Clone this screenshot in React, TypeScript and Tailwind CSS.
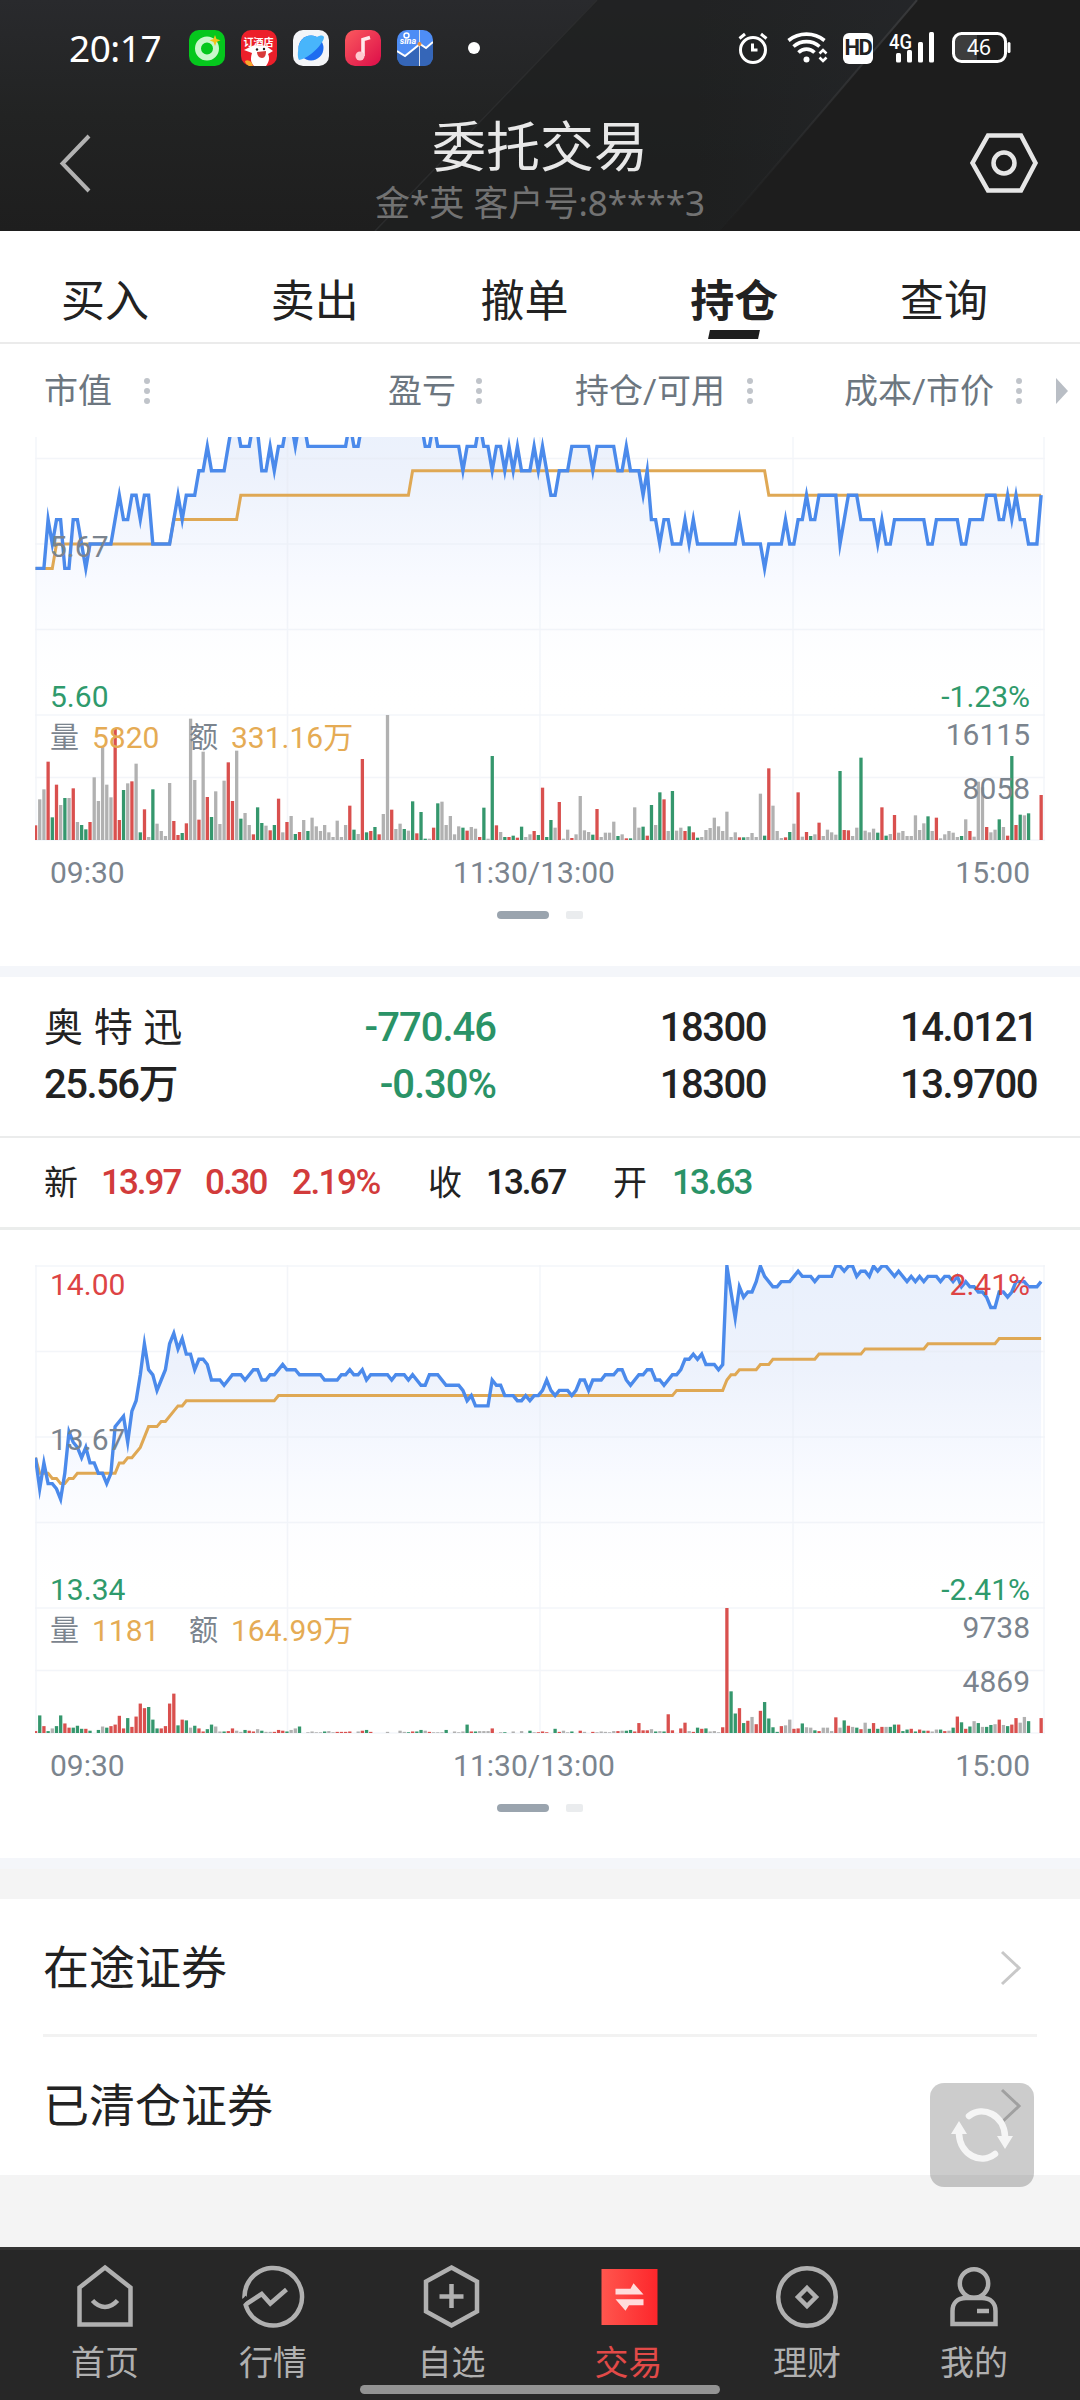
import type { ReactNode } from "react";

type Point = [number, number];

interface ChartProps {
  id: string;
  line: Point[];
  average: Point[];
  // one step of the price scale, in pixels
  step: number;
  bars: string;
  barMax: number;
  high?: string;
  highPct?: string;
  mid: string;
  low: string;
  lowPct: string;
  volume: string;
  amount: string;
  volMax: string;
  volHalf: string;
}

const TABS = ["买入", "卖出", "撤单", "持仓", "查询"];
const SLOT = 4.19;
const MID_Y = 172;
const BASE_Y = 468;

// "index:level" pairs, minute of the session and ticks from yesterday's close
const parse = (s: string): Point[] =>
  s.split(" ").map((p) => p.split(":").map(Number) as Point);

const LINE_A = parse(
  "0:-1 2:-1 3:1 4:0 5:1 6:1 7:-1 8:-1 9:1 10:1 11:0 12:-1 13:0 18:0 19:1 20:2 21:1 22:1 23:2 24:2 25:1 26:2 27:2 28:0 32:0 33:1 34:2 35:1 36:2 38:2 39:3 40:3 41:4 42:3 45:3 46:4 47:5 48:5 49:4 51:4 52:5 53:4.6 54:3 55:3 56:4 57:3 58:4 59:4 60:5 61:5 62:4 63:5 64:5 65:4 74:4 75:5 76:4 77:4 78:5 92:5 93:4 94:4 95:5 96:4 101:4 102:3 103:4 105:4 106:5 107:4 108:4 109:3 110:4 111:4 112:3 113:4 114:3 115:4 116:3 118:3 119:4 120:3 121:4 122:3 123:2 124:2 125:3 127:3 128:4 132:4 133:3 134:4 138:4 139:3 140:3 141:4 142:3 144:3 145:2 146:3 147:1 148:1 149:0 150:1 151:1 152:0 154:0 155:1 156:0 157:1 158:0 167:0 168:1 169:0 173:0 174:-1 175:0 178:0 179:1 180:0 181:0 182:1 183:1 184:2 185:1 186:1 187:2 191:2 192:0 193:1 194:2 196:2 197:1 200:1 201:0 202:1 203:0 204:0 205:1 212:1 213:0 214:0 215:1 220:1 221:0 222:0 223:1 226:1 227:2 229:2 230:1 231:1 232:2 233:1 234:2 235:1 236:1 237:0 239:0 240:2"
);
const AVG_A = parse("0:-1 4:-1 5:0 32:0 33:1 48:1 49:2 89:2 90:3 174:3 175:2 240:2");

const LINE_B = parse(
  "0:-4 1:-10 2:-5 3:-9 4:-9 5:-10 6:-12 7:-7 8:1 9:-1 10:-2 11:-4 12:-2 13:-5 14:-5 15:-7 16:-7 17:-9 18:-7 19:2 20:3 21:4 22:-1 23:5 24:7 25:12 26:18 27:13 28:12 29:9 30:11 31:13 32:18 33:20 34:17 35:19 36:16 37:16 38:13 39:15 40:15 41:14 42:11 44:11 45:10 47:12 49:12 50:11 52:13 53:13 54:11 55:11 56:12 57:12 59:14 60:13 62:13 63:12 68:12 69:11 72:11 73:12 74:12 75:13 76:12 77:12 78:13 79:11 80:12 84:12 85:11 86:12 88:12 89:11 90:12 92:10 93:10 94:12 96:12 98:10 101:10 102:9 103:7 104:8 105:6 108:6 109:11 110:10 111:10 112:8 114:8 115:7 116:7 117:8 118:7 119:8 120:8 121:9 122:11 123:9 124:8 125:9 127:9 128:8 129:9 130:11 131:11 132:9 133:11 135:11 136:12 138:12 139:13 140:13 141:11 142:10 144:12 145:12 146:13 147:13 148:11 149:11 150:10 152:12 153:12 154:13 155:15 156:15 157:16 158:15 159:16 160:14 162:14 163:13 164:14 165:33 166:28 167:23 168:29 169:27 170:28 171:28 172:30 173:33 174:31 175:30 176:29 177:29 178:30 180:30 182:32 183:31 185:31 186:30 187:31 190:31 191:33 192:33 193:32 194:33 195:33 196:31 197:32 198:32 199:31 200:33 201:32 202:33 203:33 205:31 206:32 208:30 209:31 210:30 211:31 212:30 213:31 215:31 216:30 217:31 218:31 219:30 220:31 221:29 222:30 223:29 224:29 225:28 226:28 227:27 228:25 229:25 230:28 231:28 232:27 233:28 234:30 236:30 237:29 239:29 240:30"
);
const AVG_B = parse(
  "0:-4 1:-7 3:-7 4:-8 5:-8 6:-9 7:-9 8:-8 9:-8 10:-7 19:-7 20:-5 21:-5 22:-4 23:-4 25:-2 27:2 29:2 30:3 31:3 34:6 35:6 36:7 57:7 58:8 152:8 153:9 164:9 165:11 166:12 167:12 168:13 172:13 173:14 175:14 176:15 186:15 187:16 197:16 198:17 212:17 213:18 229:18 230:19 240:19"
);

// r = up, g = down, x = flat
const BARS_A =
  "r44 x122 x152 r235 g68 r166 x105 g126 x126 r155 x54 g45 g32 r54 x188 x117 x280 x166 x128 r335 r60 g150 x170 r176 x229 g23 r92 x9 g152 x49 x27 x12 x171 r57 r15 g21 r50 x364 x180 r61 x265 r129 g69 x146 x48 x178 r233 r117 x268 g64 x81 x45 r17 g98 g51 x43 r29 g45 r124 x23 r54 x72 g18 r24 x60 g27 x67 x41 x27 x45 x23 x9 x58 x9 x45 r103 g31 x18 r243 g23 r27 g39 r17 x78 x375 r91 x33 x49 g33 x28 g116 r20 g84 g4 x4 r37 g110 x115 x45 x72 x17 x41 g37 r28 x39 x34 r9 g97 x4 g252 r44 x24 g9 r9 g13 r7 g40 x9 x17 r27 g15 r157 g9 g60 x37 r114 x4 x31 r6 x17 x132 x29 x24 g16 r93 x9 x22 x22 x55 g12 x17 r5 g5 x98 x37 g40 r13 g105 x45 g143 r122 x27 g147 x28 x37 r27 g41 r23 g7 x9 x30 x36 x67 x41 x27 x85 x9 x23 r8 g8 x9 x21 x9 x139 g13 r215 x103 x27 x6 r8 g24 x49 r143 x10 r24 g12 x17 r52 x12 x31 x23 x16 g207 r30 r29 x12 x37 g247 x28 x23 x34 g22 r98 g13 x18 r75 x22 x27 x12 x12 x74 x30 x50 g71 x27 r67 x5 x17 x27 x22 x9 g12 x62 r27 x10 x175 x158 r39 x23 x31 g62 x39 r13 g252 r45 g76 x74 g80 x0 x0 r135";
const BARS_B =
  "r5 g46 r18 g5 x12 g18 g46 r25 r14 g14 g19 g11 r11 g6 x0 g8 x17 g14 r18 r22 r45 r12 g39 r16 r43 r77 r65 g68 g35 g12 r12 r18 r77 r103 g20 r35 g33 x14 g19 r12 r4 g10 g22 x17 x4 g4 r5 r12 x6 x3 g8 r6 r4 x10 g6 x3 x3 r3 r8 r6 g4 x8 x12 g17 x0 x2 x4 x2 x2 g4 x5 x2 r3 r3 r3 r4 x0 x4 r6 g8 r3 x0 x0 x0 x3 x0 x0 x6 x3 g2 r4 g4 g8 x6 r3 x2 x2 x2 g8 x0 x4 x2 x4 g22 r4 g4 x5 x5 x5 r12 x0 x2 g2 x0 x4 x0 x5 x0 g6 x2 r2 r4 r2 x0 g11 r3 x6 x2 g4 x0 r6 x3 x0 r3 x2 x4 x3 x2 x5 r5 x6 g6 g8 r4 r26 r7 r7 x10 g4 x5 g4 r49 r7 x0 r12 r27 x5 r3 g14 r11 g12 x4 x5 x2 r15 r327 g109 g51 r65 g26 r32 x42 r23 r58 g81 g38 g15 g3 r18 x20 x35 r11 r12 g25 x15 x14 g7 r5 x14 x14 x5 r41 x14 g33 r19 x16 g14 r10 x27 g11 r26 g11 r16 x16 g16 g22 r22 g5 g9 r11 g4 r9 g6 r6 x4 x9 g9 r5 x6 g14 r43 g28 r11 g17 x31 g26 x16 g16 g21 x23 r35 x21 g18 r22 r39 x27 x42 g31 x0 x0 r39";

const BAR_COLORS: Record<string, string> = {
  r: "#d9504e",
  g: "#35976d",
  x: "#b1b1b1",
};

function toPath(points: Point[], step: number) {
  return points
    .map(([i, v], n) => `${n ? "L" : "M"}${(0.5 + i * SLOT).toFixed(1)} ${(MID_Y - v * step).toFixed(1)}`)
    .join("");
}

function TrendChart(props: ChartProps) {
  const { id, line, average, step, bars, barMax } = props;
  const path = toPath(line, step);

  return (
    <div className="h-[628px] shrink-0 pt-[35px]">
      <div className="relative mx-[35px]">
        <svg width="1010" height="470" viewBox="0 0 1010 470" fill="none">
          <defs>
            <linearGradient id={`fill-${id}`} x1="0" y1="0" x2="0" y2="343" gradientUnits="userSpaceOnUse">
              <stop offset="0" stopColor="#e9f0fc" />
              <stop offset="0.3" stopColor="#edf2fc" />
              <stop offset="0.6" stopColor="#f8faff" />
              <stop offset="1" stopColor="#ffffff" stopOpacity="0" />
            </linearGradient>
            <clipPath id={`clip-${id}`}>
              <rect x="0" y="0" width="1010" height="470" />
            </clipPath>
          </defs>
          <g clipPath={`url(#clip-${id})`}>
            <path d={`${path}V343H0.5Z`} fill={`url(#fill-${id})`} />
            <path
              d="M0 1H1010M0 86.5H1010M0 172H1010M0 257.5H1010M0 343H1010M0 405.5H1010M0 468H1010M1 0V468M252.5 0V468M505 0V468M758 0V468M1009 0V468"
              stroke="#e4e9f1"
              strokeOpacity="0.45"
              strokeWidth="1.5"
            />
            <path d={toPath(average, step)} stroke="#dfa854" strokeWidth="3" />
            <path d={path} stroke="#4b8aeb" strokeWidth="3.4" strokeMiterlimit="12" />
            {bars.split(" ").map((bar, i) => {
              const h = (Number(bar.slice(1)) / barMax) * 125;
              return (
                <rect
                  key={i}
                  x={i * SLOT - 1.1}
                  y={BASE_Y - h}
                  width="3.3"
                  height={h}
                  fill={BAR_COLORS[bar[0]]}
                />
              );
            })}
          </g>
        </svg>

        {props.high && (
          <div className="absolute inset-x-[15px] top-[1px] flex justify-between text-[#dd4444]">
            <span>{props.high}</span>
            <span>{props.highPct}</span>
          </div>
        )}
        <div className="absolute left-[15px] top-[156px] text-[#7b848e]">{props.mid}</div>
        <div className="absolute inset-x-[15px] top-[306px] flex justify-between text-[#2f9a6c]">
          <span>{props.low}</span>
          <span>{props.lowPct}</span>
        </div>
        <div className="absolute left-[15px] top-[347px] flex text-[#e5ab54]">
          <span className="w-[42px] text-[29px] text-[#7b848e]">量</span>
          <span className="w-[97px]">{props.volume}</span>
          <span className="w-[42px] text-[29px] text-[#7b848e]">额</span>
          <span>{props.amount}</span>
        </div>
        <div className="absolute right-[15px] top-[344px] text-[#7b848e]">{props.volMax}</div>
        <div className="absolute right-[15px] top-[398px] text-[#7b848e]">{props.volHalf}</div>
      </div>

      <div className="mx-[50px] mt-[12px] grid grid-cols-[1fr_auto_1fr] text-[#7b848e]">
        <span>09:30</span>
        <span className="-ml-[12px]">11:30/13:00</span>
        <span className="text-right">15:00</span>
      </div>
      <div className="ml-[497px] mt-[19px] flex gap-[17px]">
        <div className="h-2 w-[52px] rounded-full bg-[#9aa4ae]" />
        <div className="h-2 w-[17px] rounded-[2px] bg-[#eaecee]" />
      </div>
    </div>
  );
}

function SortDots() {
  return (
    <span className="flex flex-col gap-[4px]">
      <span className="size-[6px] rounded-full bg-[#c0c4ca]" />
      <span className="size-[6px] rounded-full bg-[#c0c4ca]" />
      <span className="size-[6px] rounded-full bg-[#c0c4ca]" />
    </span>
  );
}

function StatusBar() {
  return (
    <div className="flex h-[96px] items-center pl-[69px]">
      <span className="mb-[2px] w-[120px] font-['Noto_Sans'] text-[37px] leading-none tracking-[-0.5px] text-white">20:17</span>
      <div className="flex items-center gap-4">
        <svg width="36" height="36" viewBox="0 0 36 36">
          <rect width="36" height="36" rx="10" fill="#05c71d" />
          <circle cx="18" cy="18.5" r="9" fill="none" stroke="#c9f7cb" strokeWidth="6" />
          <path d="M26 5l1.5 4 4 1.2-4 1.8-1.5 4-1.5-4-4-1.8 4-1.2z" fill="#f5c518" />
        </svg>
        <svg width="36" height="36" viewBox="0 0 36 36">
          <rect width="36" height="36" rx="10" fill="#ec1f2a" />
          <text x="17.5" y="16" fontSize="10" fontWeight="700" fill="#fff" textAnchor="middle">订酒店</text>
          <path d="M3 20l8-4c4-1 10-1 14 0l7 5-5 3c2 4 1 8-2 12H13c-3-3-4-7-2-13z" fill="#fff" />
          <path d="M16 22l9-1c0 4-1 7-4 7s-5-3-5-6z" fill="#d83a3a" />
          <circle cx="16" cy="19.5" r="1.2" fill="#222" />
          <circle cx="23" cy="19" r="1.2" fill="#222" />
          <path d="M4 31c3-2 7 0 8 5H8c-2-1-4-3-4-5z" fill="#f5a92c" />
        </svg>
        <svg width="36" height="36" viewBox="0 0 36 36">
          <rect width="36" height="36" rx="10" fill="#f4f5f8" />
          <circle cx="18" cy="18" r="12.5" fill="#1e6cf0" />
          <path d="M6 30C4 26 5 21 6 15A12.5 12.5 0 0124 7c3-2 6-2 7 0 0 6-14 21-25 23z" fill="#48b5fb" />
        </svg>
        <svg width="36" height="36" viewBox="0 0 36 36">
          <defs>
            <linearGradient id="music" x1="0" y1="0" x2="1" y2="1">
              <stop offset="0" stopColor="#fb5a5e" />
              <stop offset="1" stopColor="#dc0d49" />
            </linearGradient>
          </defs>
          <rect width="36" height="36" rx="10" fill="url(#music)" />
          <path d="M18 26V9.500l7-2" fill="none" stroke="#ffe9ec" strokeWidth="3.600" />
          <circle cx="15" cy="26" r="4.500" fill="#ffc9d0" />
        </svg>
        <svg width="36" height="36" viewBox="0 0 36 36">
          <rect width="36" height="36" rx="10" fill="#4e8df5" />
          <path d="M0 21l8 5 15-12 6 4 7-6v14q0 10-10 10H10Q0 36 0 26z" fill="#3566b8" />
          <path d="M0 21l8 5 15-12 6 4 7-6" fill="none" stroke="#fff" strokeWidth="2" />
          <path d="M22.500 0V36" stroke="#d9dfea" />
          <circle cx="22.500" cy="14" r="2" fill="#f0913a" />
          <circle cx="9.500" cy="5.500" r="2.500" fill="none" stroke="#fff" strokeWidth="1.500" />
          <text x="11" y="14" fontSize="9" fontStyle="italic" fontWeight="700" fill="#fff" textAnchor="middle">sina</text>
        </svg>
      </div>
      <div className="ml-[35px] size-3 rounded-full bg-white" />

      <div className="ml-[257px] flex items-center">
        <svg width="32" height="34" viewBox="0 0 32 34" fill="none" stroke="#fff" strokeWidth="3">
          <circle cx="16" cy="19" r="12.500" />
          <path d="M15.500 12.500V19H20.500M2.500 7.500L8 3M24 3l5.500 4.500" />
        </svg>
        <svg className="ml-[18px]" width="42" height="34" viewBox="0 0 42 34" fill="none" stroke="#fff">
          <path d="M1.500 9.500C12 1 27 1 37.500 9.500M6.500 15.500C14 9 25 9 32.500 15.500M11.500 21.500C16 17 23 17 27.500 21.500" strokeWidth="3.600" />
          <circle cx="19.500" cy="28.500" r="3" fill="#fff" stroke="none" />
          <path d="M32.500 22.500l3.500-3.500 3.500 3.500M32.500 26.500l3.500 3.500 3.500-3.500" strokeWidth="2.600" />
        </svg>
        <div className="ml-[14px] flex h-[31px] w-[30px] items-center justify-center rounded-md bg-white">
          <span className="font-[Roboto] text-[22px] font-bold leading-none tracking-[-1.500px] text-[#222]">HD</span>
        </div>
        <svg className="ml-[15px]" width="48" height="34" viewBox="0 0 48 34" fill="#fff">
          <text x="1" y="17.500" fontFamily="Roboto" fontSize="21" fontWeight="500" textLength="23" lengthAdjust="spacingAndGlyphs">4G</text>
          <rect x="8" y="22" width="5" height="9.500" rx="1.500" />
          <rect x="19" y="19" width="5" height="12.500" rx="1.500" />
          <rect x="30" y="11" width="5" height="20.500" rx="1.500" />
          <rect x="41" y="1" width="5" height="30.500" rx="1.500" />
        </svg>
        <svg className="ml-[16px]" width="60" height="34" viewBox="0 0 60 34">
          <rect x="3" y="4" width="22" height="26" fill="#3d3d3d" />
          <rect x="1.500" y="2.500" width="52" height="28" rx="8" fill="none" stroke="#fff" strokeWidth="3" />
          <rect x="55.500" y="11" width="3" height="11" rx="1.500" fill="#fff" />
          <text x="27" y="24" fontFamily="Noto Sans" fontSize="21" fill="#fff" textAnchor="middle">46</text>
        </svg>
      </div>
    </div>
  );
}

function Header() {
  return (
    <header className="relative h-[231px] overflow-hidden bg-linear-to-b from-[#292a2d] via-[#222323] to-[#1e1e1e]">
      <svg className="absolute inset-0" width="1080" height="231" viewBox="0 0 1080 231">
        <defs>
          <linearGradient id="beam" x1="0" y1="0" x2="1" y2="0">
            <stop offset="0.3" stopColor="#282a2f" stopOpacity="0" />
            <stop offset="1" stopColor="#282a2f" stopOpacity="0.9" />
          </linearGradient>
          <linearGradient id="edge" x1="0" y1="0" x2="0" y2="1">
            <stop offset="0" stopColor="#38393b" />
            <stop offset="1" stopColor="#38393b" stopOpacity="0" />
          </linearGradient>
        </defs>
        <path d="M597 0H1080V231H375Z" fill="#1e1f1f" opacity="0.7" />
        <path d="M917 0H1080V231H720Z" fill="#1d1d1d" />
        <path d="M700 0H917L720 231H600Z" fill="url(#beam)" opacity="0.5" />
        <path d="M917 0L720 231" stroke="url(#edge)" strokeWidth="2" />
        <path d="M597 0L375 231" stroke="#2b2c2d" strokeWidth="1.500" />
      </svg>
      <div className="relative">
        <StatusBar />
        <div className="grid grid-cols-[1fr_auto_1fr] items-start pl-[58px] pr-[40px]">
          <svg className="mt-[37px]" width="36" height="60" viewBox="0 0 36 60" fill="none" stroke="#b2b2b2" strokeWidth="4">
            <path d="M31 3L4.500 30.500L31 58" />
          </svg>
          <div className="-ml-[18px] mt-[18px] flex flex-col items-center">
            <h1 className="text-[54px] leading-[70px] text-[#e8e8e8]">委托交易</h1>
            <p className="mt-[-3px] whitespace-pre font-['Noto_Sans','Noto_Sans_CJK_SC',sans-serif] text-[35px] leading-[44px] text-[#727272]">金*英 客户号:8****3</p>
          </div>
          <svg className="mt-[36px] justify-self-end" width="72" height="62" viewBox="0 0 72 62" fill="none" stroke="#e6e6e6" strokeWidth="4.500">
            <path d="M20 3.500H53L67.500 31L53 58.500H20L4.500 31Z" />
            <circle cx="36" cy="31" r="10.500" />
          </svg>
        </div>
      </div>
    </header>
  );
}

function Tabs() {
  return (
    <nav className="flex h-[113px] border-b-2 border-[#ebebeb] pr-[31px] text-[44px] text-[#222]">
      {TABS.map((tab) => (
        <div key={tab} className="flex flex-1 flex-col items-center pt-[43px]">
          <span className={tab === "持仓" ? "leading-[56px] font-bold" : "leading-[56px]"}>{tab}</span>
          {tab === "持仓" && <div className="h-[9px] w-[50px] -skew-x-12 bg-[#1e1e1e]" />}
        </div>
      ))}
    </nav>
  );
}

function ColumnHeader() {
  return (
    <div className="flex h-[93px] items-center pl-[44px] text-[34px] text-[#6c767f]">
      <span className="w-[100px]">市值</span>
      <SortDots />
      <span className="ml-[238px] w-[88px]">盈亏</span>
      <SortDots />
      <span className="ml-[93px] w-[172px]">持仓/可用</span>
      <SortDots />
      <span className="ml-[91px] w-[172px]">成本/市价</span>
      <SortDots />
      <svg className="ml-[34px]" width="12" height="26" viewBox="0 0 12 26" fill="#b9bec5">
        <path d="M0 0L12 13L0 26Z" />
      </svg>
    </div>
  );
}

function Holding() {
  return (
    <div className="h-[161px] border-b-2 border-[#ebecec] pl-[44px] pr-[43px] pt-[22px] text-[40px] font-medium tracking-[-1.500px] text-[#222]">
      <div className="flex h-[57px] items-center">
        <span className="w-[252px] whitespace-pre text-[39px] font-normal tracking-[0.500px]">奥 特 迅</span>
        <span className="w-[200px] text-right tracking-[-1px] text-[#2a9367]">-770.46</span>
        <span className="w-[270px] text-right">18300</span>
        <span className="flex-1 text-right">14.0121</span>
      </div>
      <div className="flex h-[57px] items-center">
        <span className="w-[252px]">25.56万</span>
        <span className="w-[200px] text-right tracking-[-1px] text-[#2a9367]">-0.30%</span>
        <span className="w-[270px] text-right">18300</span>
        <span className="flex-1 text-right">13.9700</span>
      </div>
    </div>
  );
}

function Quote() {
  return (
    <div className="flex h-[92px] items-center border-b-[3px] border-[#ebedec] pl-[44px] text-[35px] font-medium tracking-[-2px] text-[#222]">
      <span className="w-[57px] text-[34px] font-normal">新</span>
      <span className="w-[104px] text-[#d23b3b]">13.97</span>
      <span className="w-[87px] text-[#d23b3b]">0.30</span>
      <span className="w-[136px] tracking-[-1.500px] text-[#d23b3b]">2.19%</span>
      <span className="w-[58px] text-[34px] font-normal">收</span>
      <span className="w-[127px]">13.67</span>
      <span className="w-[59px] text-[34px] font-normal">开</span>
      <span className="text-[#2a9367]">13.63</span>
    </div>
  );
}

function LinkRow({ label }: { label: string }) {
  return (
    <div className="flex h-[138px] items-center justify-between pr-[15px]">
      <span className="text-[46px] text-[#222]">{label}</span>
      <svg width="22" height="36" viewBox="0 0 22 36" fill="none" stroke="#c8c8c8" strokeWidth="3">
        <path d="M2 2L19 18L2 34" />
      </svg>
    </div>
  );
}

interface NavItemProps {
  label: string;
  active?: boolean;
  children: ReactNode;
}

function NavItem({ label, active, children }: NavItemProps) {
  return (
    <div className={`flex flex-col items-center ${active ? "text-[#e24a48]" : "text-[#b0b0b0]"}`}>
      <svg width="70" height="70" viewBox="0 0 70 70" fill="none" stroke="#b0b0b0" strokeWidth="4.500">
        {children}
      </svg>
      <span className="mt-[8px] text-[34px] leading-[48px]">{label}</span>
    </div>
  );
}

function BottomNav() {
  return (
    <footer className="relative h-[153px] border-t-[3px] border-[#343434] bg-[#272727] pl-[21px] pt-[11px]">
      <div className="grid grid-cols-[168px_168px_189px_165px_192px_142px]">
        <NavItem label="首页">
          <path d="M35 6.500L60.500 26.500V63.500H9.500V26.500Z" />
          <path d="M22.500 39.500C30 48 40 48 47.500 39.500" />
        </NavItem>
        <NavItem label="行情">
          <path d="M6.500 37.500A28.800 28.800 0 1 1 7.500 43.500L23.700 33L32.300 42.500L48.500 28.500" />
          <path d="M3 43L9 36" stroke="#272727" strokeWidth="4" />
        </NavItem>
        <NavItem label="自选">
          <path d="M34.500 6.500L60 20.500V50.500L34.500 64.500L9 50.500V20.500Z" />
          <path d="M34.500 23V47M22.500 35.500H46.500" />
        </NavItem>
        <NavItem label="交易" active>
          <defs>
            <linearGradient id="trade" x1="0" y1="0" x2="1" y2="0">
              <stop offset="0" stopColor="#ff564e" />
              <stop offset="1" stopColor="#fd262b" />
            </linearGradient>
          </defs>
          <rect x="7.500" y="8" width="56" height="56" fill="url(#trade)" stroke="none" />
          <path
            d="M21.500 27.700H36.500L39.500 22.300L49.500 33.500H21.500ZM49.500 38.300H21.500L31.500 49.700L35 44.300H49.500Z"
            fill="#ffdcdb"
            stroke="none"
          />
        </NavItem>
        <NavItem label="理财">
          <circle cx="35" cy="36" r="28.800" />
          <path d="M35 27L44 36L35 45L26 36Z" />
        </NavItem>
        <NavItem label="我的">
          <circle cx="35" cy="22.500" r="14.200" />
          <path d="M13.500 63V50C13.500 42 18.500 37 27 37H43C51.500 37 56.500 42 56.500 50V63Z" />
          <path d="M38 50H50" />
        </NavItem>
      </div>
      <div className="absolute left-[360px] top-[135px] h-[9px] w-[360px] rounded-full bg-[#939393]" />
    </footer>
  );
}

export default function App() {
  return (
    <div className="flex h-[2400px] w-[1080px] flex-col overflow-hidden bg-[#f4f4f4] font-[Roboto,'Noto_Sans_CJK_SC',sans-serif] text-[30px] leading-[38px]">
      <Header />
      <div className="bg-white">
        <Tabs />
        <ColumnHeader />
        <div className="flex h-[529px] flex-col justify-end overflow-hidden pb-[1px]">
          <TrendChart
            id="a"
            line={LINE_A}
            average={AVG_A}
            step={24.4}
            bars={BARS_A}
            barMax={375}
            mid="5.67"
            low="5.60"
            lowPct="-1.23%"
            volume="5820"
            amount="331.16万"
            volMax="16115"
            volHalf="8058"
          />
        </div>
        <div className="h-[11px] bg-[#f4f6fa]" />
        <Holding />
        <Quote />
        <TrendChart
          id="b"
          line={LINE_B}
          average={AVG_B}
          step={5.18}
          bars={BARS_B}
          barMax={327}
          high="14.00"
          highPct="2.41%"
          mid="13.67"
          low="13.34"
          lowPct="-2.41%"
          volume="1181"
          amount="164.99万"
          volMax="9738"
          volHalf="4869"
        />
      </div>
      <div className="h-[11px] bg-[#f4f6fa]" />
      <div className="relative mt-[30px] bg-white px-[43px]">
        <LinkRow label="在途证券" />
        <div className="-mt-[3px] h-[3px] bg-[#f2f2f2]" />
        <LinkRow label="已清仓证券" />
        <div className="absolute left-[930px] top-[184px] flex size-[104px] items-center justify-center rounded-[14px] bg-black/20">
          <svg width="70" height="64" viewBox="0 0 70 64" fill="none">
            <path d="M22 13C36 2 57 12 58 33M48 51C34 62 13 52 12 31" stroke="#f5f5f5" strokeWidth="6.500" strokeLinecap="round" />
            <path d="M50 33H66L58 46ZM4 31H20L12 18Z" fill="#f5f5f5" />
          </svg>
        </div>
      </div>
      <div className="flex-1" />
      <BottomNav />
    </div>
  );
}
